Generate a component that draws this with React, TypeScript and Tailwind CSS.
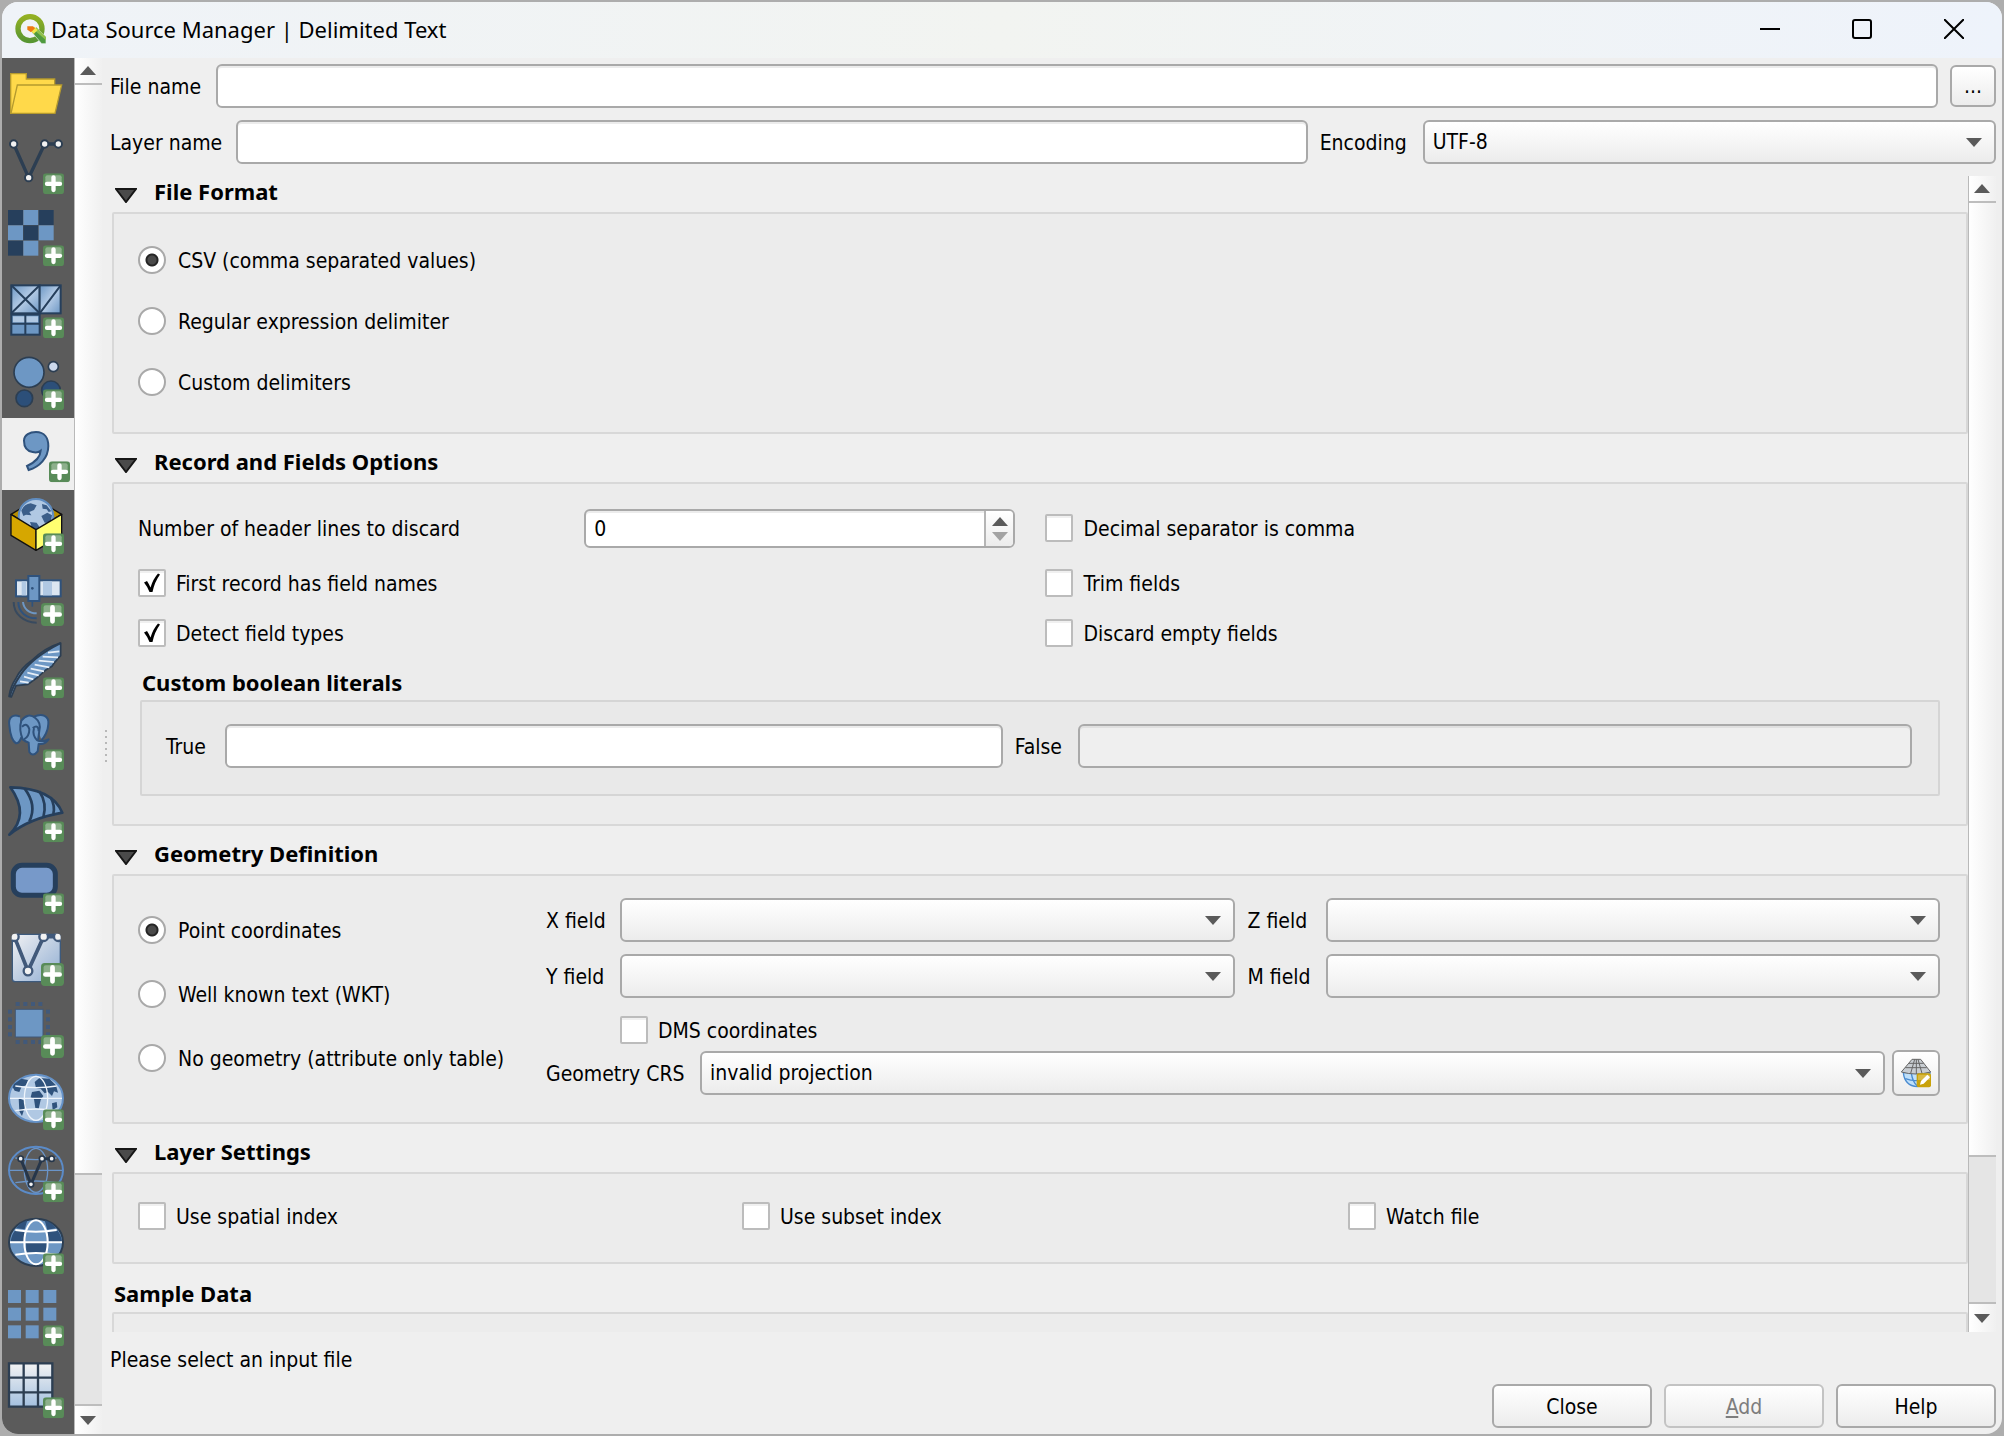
import clsx from 'clsx';
import { useId, useState } from 'react';
import type { ReactNode } from 'react';

const NAVY = '#263f5c';
const BLUE = '#6d97c4';
const PALE = '#b0c8e3';

const fieldBase =
  "h-11 min-w-0 rounded-md border-2 border-[#a9a9a9] px-2 font-['DejaVu_Sans_Condensed',sans-serif] text-[21px] text-black outline-none";
const raised = 'bg-linear-to-b from-white to-[#ececec]';
const inset = 'bg-white shadow-[inset_0_2px_0_#ececec]';

/* ---------- sidebar drawings, all on a 216 unit square ---------- */

function PlusBadge({ x = 123, y = 130, size = 63 }: { x?: number; y?: number; size?: number }) {
  return (
    <svg x={x} y={y} width={size} height={size} viewBox="0 0 63 63">
      <rect width="63" height="63" rx="10" fill="#588b58" />
      <path d="M7 30V12q0-6 6-6h37q6 0 6 6v18z" fill="#8db08c" />
      <path d="M31.500 12v38M12 31.500h39" stroke="#fff" strokeWidth="13" strokeLinecap="round" />
    </svg>
  );
}

function Nodes({ points, r, stroke, width }: { points: number[][]; r: number; stroke: string; width: number }) {
  return (
    <g stroke={stroke} strokeWidth={width}>
      <polyline points={points.map((p) => p.join(',')).join(' ')} fill="none" strokeWidth={width + 4} />
      {points.map(([cx, cy]) => (
        <circle key={cx} cx={cx} cy={cy} r={r} fill="#f2f2f2" />
      ))}
    </g>
  );
}

function Graticule({ stroke, width }: { stroke: string; width: number }) {
  return (
    <g stroke={stroke} strokeWidth={width} fill="none">
      <ellipse cx="102" cy="97" rx="35" ry="66" />
      <path d="M24 97h156M40 60q62 10 124 0M40 134q62-10 124 0" />
    </g>
  );
}

function FolderIcon() {
  return (
    <g stroke="#b59a2e" strokeWidth="4" fill="#ffd94a">
      <path d="M26 166V47h47v16h85v20L150 166z" />
      <path d="M46 81h133l-20 85H27z" />
    </g>
  );
}

function VectorIcon() {
  return <Nodes points={[[35, 42], [80, 143], [128, 42], [169, 42]]} r={11} stroke="#2c3e52" width={6} />;
}

function RasterIcon() {
  return (
    <g>
      {[0, 1, 2, 3, 4, 5, 6, 7].map((i) => (
        <rect
          key={i}
          x={18 + (i % 3) * 46}
          y={24 + Math.floor(i / 3) * 46}
          width="45"
          height="45"
          fill={i % 2 ? BLUE : NAVY}
        />
      ))}
    </g>
  );
}

function MeshIcon() {
  return (
    <g stroke={NAVY} strokeWidth="6">
      <rect x="28" y="34" width="85" height="84" fill="url(#sheen)" />
      <rect x="113" y="34" width="63" height="84" fill="url(#sheen)" />
      <rect x="28" y="122" width="85" height="60" fill={BLUE} />
      <path d="M33 127h75v18H33z" fill={PALE} stroke="none" />
      <path d="M28 34l85 84M113 34l-85 84M113 118l63-84M28 149h85M70 120v62" fill="none" />
    </g>
  );
}

function PointCloudIcon() {
  return (
    <g stroke="#2c3e52" strokeWidth="5">
      <circle cx="147" cy="133" r="28" fill="#2c4f79" />
      <circle cx="67" cy="157" r="25" fill="#2c4f79" />
      <circle cx="81" cy="79" r="45" fill={BLUE} />
      <circle cx="154" cy="62" r="15" fill="#cdd9ec" />
    </g>
  );
}

function CommaIcon() {
  return (
    <path
      d="M66 68C66 50 84 42 102 42C128 42 139 61 139 84C139 120 112 147 80 156L75 144C97 134 115 118 116 98C110 103 100 104 92 102C75 99 66 86 66 68Z"
      fill={BLUE}
      stroke="#2f527c"
      strokeWidth="6"
    />
  );
}

function GeoPackageIcon() {
  return (
    <g strokeLinejoin="round">
      <path d="M27 73l40-24h72l40 24-77 46z" fill="#b88f00" stroke="#111" strokeWidth="4" />
      <circle cx="102" cy="79" r="52" fill={PALE} stroke="#5f8cc0" strokeWidth="6" />
      <path
        d="M58 62q8-20 28-22l18 6-8 14-14 6 6 10-16-2-8 4zM84 96l20 2 8 12-8 22-12-12zM120 42l14 4 14 18-8 2-6-8-12-2zM118 78l18-10 14 8-4 22-18 0z"
        fill="#3b5e89"
      />
      <path d="M27 73l75 46v62l-75-45z" fill="#d6a700" stroke="#111" strokeWidth="4" />
      <path d="M102 119l77-46v63l-77 45z" fill="#ffff70" stroke="#111" strokeWidth="4" />
    </g>
  );
}

function SatelliteIcon() {
  return (
    <g fill="none">
      <path d="M35 120c0 36 30 62 69 62" stroke="#384a5f" strokeWidth="6" />
      <path d="M49 120c0 30 24 49 55 49" stroke="#2f527c" strokeWidth="6" />
      <path d="M63 120c2 20 18 34 41 34" stroke={BLUE} strokeWidth="6" />
      <path d="M91 120v14" stroke="#2f527c" strokeWidth="5" />
      <rect x="42" y="55" width="37" height="48" fill="#dce6f1" stroke="#2f527c" strokeWidth="6" />
      <path d="M59 58h14v42H59z" fill={PALE} />
      <rect x="99" y="55" width="77" height="48" fill="#dce6f1" stroke="#2f527c" strokeWidth="6" />
      <path d="M123 58h27v42h-27z" fill={PALE} />
      <path d="M79 42h33v75H79z" fill={BLUE} stroke="#2f527c" strokeWidth="6" />
      <circle cx="91" cy="79" r="4" fill="#2f527c" />
    </g>
  );
}

function FeatherIcon() {
  return (
    <g>
      <path
        d="M176 27v38l-18 20-8 12-20 12-22 20-30 22-36 4-14 34-7-2q4-30 22-56 14-28 44-50 44-42 89-54z"
        fill={BLUE}
        stroke="#2c3e52"
        strokeWidth="5"
        strokeLinejoin="round"
      />
      <path
        d="M138 56l34-4M122 68l46 2M110 80l46 4M98 92l44 8M86 104l40 8M76 116l34 8M66 128l28 8M54 142l26 4"
        stroke="#e6eef7"
        strokeWidth="5"
      />
      <path d="M176 27Q90 70 56 122Q30 160 24 186" stroke="#2c3e52" strokeWidth="6" fill="none" />
    </g>
  );
}

function ElephantIcon() {
  return (
    <g fill={BLUE} stroke="#2f527c" strokeWidth="6" strokeLinejoin="round">
      <path d="M54 32C34 22 18 34 22 58C24 80 30 104 42 112C50 112 56 100 58 94M96 32C120 20 142 30 139 54C138 74 128 94 118 102" />
      <path d="M58 44Q78 18 100 36Q118 50 112 74L108 104Q124 108 140 100Q130 116 110 114L107 136Q92 154 82 138L80 110Q70 106 62 100Q50 70 58 44Z" />
      <path d="M60 62Q76 48 82 70Q82 92 66 100M92 66Q110 54 110 76M96 66Q90 88 106 104" fill="none" />
    </g>
  );
}

function SailIcon() {
  return (
    <g stroke={NAVY} strokeWidth="8" strokeLinejoin="round">
      <path d="M25 28Q150 30 181 104Q80 122 22 170Q84 110 25 28Z" fill={BLUE} />
      <path d="M68 32Q106 82 82 130M112 40Q136 76 124 118M146 58Q160 84 154 108" fill="none" />
    </g>
  );
}

function RoundedDbIcon() {
  return <rect x="34" y="46" width="126" height="90" rx="26" fill="#7799c9" stroke={NAVY} strokeWidth="15" />;
}

function VirtualIcon() {
  return (
    <g>
      <clipPath id="virtual-clip">
        <rect x="29" y="35" width="147" height="145" rx="10" />
      </clipPath>
      <rect x="31" y="37" width="144" height="142" rx="9" fill="url(#paper)" stroke="#3d5a7c" strokeWidth="4" />
      <g clipPath="url(#virtual-clip)">
        <Nodes points={[[37, 44], [78, 147], [125, 44], [169, 44]]} r={13} stroke="#41597a" width={7} />
      </g>
    </g>
  );
}

function MemoryIcon() {
  return (
    <g fill="#41597a">
      {[47, 70, 93, 115].map((n) => (
        <g key={n}>
          <rect x={n - 6} y="24" width="12" height="12" />
          <rect x={n - 6} y="138" width="12" height="12" />
          <rect x="18" y={n} width="12" height="12" />
          <rect x="132" y={n} width="12" height="12" />
        </g>
      ))}
      <rect x="40" y="46" width="83" height="83" fill={BLUE} stroke="#41597a" strokeWidth="3" />
    </g>
  );
}

function WmsIcon() {
  return (
    <g>
      <ellipse cx="102" cy="97" rx="81" ry="71" fill={PALE} stroke="#6592c8" strokeWidth="6" />
      <path
        d="M36 54l22-16 20 4-6 16-14 6-6 14-14-4-6-10zM50 96l18 8 2 16-10 30-8-14zM98 48l14-12 30 2 20 20 6 22-12-4-6 14-12-12-10 4-12-14-14-2zM90 78l22-4 12 16-8 12-6 26-10-2-4-26-10-6zM150 112l14-4 2 16-14 8z"
        fill="#2f527c"
      />
      <Graticule stroke="#eef4fb" width={4} />
    </g>
  );
}

function WfsIcon() {
  return (
    <g>
      <ellipse cx="102" cy="97" rx="81" ry="71" fill="none" stroke="#5b8bc8" strokeWidth="6" />
      <Graticule stroke="#6a94c8" width={4} />
      <Nodes points={[[56, 62], [87, 139], [120, 62], [149, 62]]} r={8} stroke="#26364a" width={5} />
    </g>
  );
}

function WcsIcon() {
  return (
    <g>
      <ellipse cx="102" cy="97" rx="81" ry="71" fill={BLUE} stroke="#2c3e52" strokeWidth="6" />
      <path d="M42 55q10-16 34-24l-8 27zM128 31q22 6 34 24l-26 4zM72 98h64l-3 34H73z" fill="#2f527c" />
      <path d="M26 95q2-20 14-34l30 3-4 31zM180 95q-2-20-14-34l-30 3 4 31z" fill="#2f527c" />
      <Graticule stroke="#fff" width={6} />
    </g>
  );
}

function XyzIcon() {
  return (
    <g fill={BLUE}>
      {[0, 1, 2, 3, 4, 5, 6, 7].map((i) => (
        <rect key={i} x={18 + (i % 3) * 53} y={24 + Math.floor(i / 3) * 53} width="39" height="39" />
      ))}
    </g>
  );
}

function VectorTileIcon() {
  return (
    <g>
      <rect x="20" y="27" width="132" height="132" fill="url(#tiles)" />
      <path d="M21 25v136M65 25v136M108 25v136M151 25v136M18 28h136M18 71h136M18 115h136M18 158h136" stroke="#2c3e52" strokeWidth="7" />
    </g>
  );
}

const sources: { name: string; Icon: () => ReactNode; badge?: { x?: number; y?: number; size?: number } | null }[] = [
  { name: 'Browser', Icon: FolderIcon, badge: null },
  { name: 'Vector', Icon: VectorIcon },
  { name: 'Raster', Icon: RasterIcon },
  { name: 'Mesh', Icon: MeshIcon },
  { name: 'Point Cloud', Icon: PointCloudIcon },
  { name: 'Delimited Text', Icon: CommaIcon, badge: { x: 141 } },
  { name: 'GeoPackage', Icon: GeoPackageIcon },
  { name: 'GPS', Icon: SatelliteIcon, badge: { x: 117, y: 123, size: 69 } },
  { name: 'SpatiaLite', Icon: FeatherIcon },
  { name: 'PostgreSQL', Icon: ElephantIcon },
  { name: 'SQL Server', Icon: SailIcon },
  { name: 'Oracle', Icon: RoundedDbIcon },
  { name: 'Virtual Layer', Icon: VirtualIcon, badge: { x: 117, y: 123, size: 69 } },
  { name: 'SAP HANA', Icon: MemoryIcon, badge: { x: 117, y: 123, size: 69 } },
  { name: 'WMS/WMTS', Icon: WmsIcon },
  { name: 'WFS', Icon: WfsIcon },
  { name: 'WCS', Icon: WcsIcon },
  { name: 'XYZ', Icon: XyzIcon },
  { name: 'Vector Tile', Icon: VectorTileIcon },
];

function Gradients() {
  return (
    <svg className="absolute size-0" aria-hidden="true">
      <defs>
        <linearGradient id="sheen" x1="0" y1="0" x2="1" y2="1">
          <stop offset="0" stopColor={BLUE} />
          <stop offset="0.5" stopColor="#b4cbe6" />
          <stop offset="1" stopColor={BLUE} />
        </linearGradient>
        <linearGradient id="paper" x1="0" y1="0" x2="1" y2="1">
          <stop offset="0" stopColor="#f1f1f3" />
          <stop offset="1" stopColor="#8fadd2" />
        </linearGradient>
        <linearGradient id="tiles" x1="0" y1="0" x2="0" y2="1">
          <stop offset="0" stopColor="#f3f3f3" />
          <stop offset="1" stopColor="#a3c0e0" />
        </linearGradient>
        <linearGradient id="ring" x1="0" y1="0" x2="0" y2="1">
          <stop offset="0" stopColor="#93b023" />
          <stop offset="1" stopColor="#589632" />
        </linearGradient>
      </defs>
    </svg>
  );
}

function QgisLogo() {
  return (
    <svg viewBox="0 0 93 90" className="h-[30px] w-[31px]" aria-hidden="true">
      <circle cx="45" cy="44" r="36" fill="none" stroke="url(#ring)" strokeWidth="16" />
      <path d="M50 54l14-14 29 29v20H80z" fill="#4f9a3f" stroke="#eff3f8" strokeWidth="2" />
      <path d="M64 40l29 29v10L57 47z" fill="#8fc04a" />
      <path d="M46 48l12-10 10 10-12 12z" fill="#f0e64a" />
      <path d="M37 37h17l6 6-12 12-11-8z" fill="#ee7913" />
    </svg>
  );
}

function CrsIcon() {
  return (
    <svg viewBox="0 0 96 90" className="h-[30px] w-8" aria-hidden="true">
      <path d="M10 44q4 40 42 42 36-4 38-42z" fill="#bfe0fa" stroke="#4a8bd0" strokeWidth="4" />
      <path d="M34 46q4 26 18 38M66 46q-2 20-14 38M16 62q32 12 66 0" fill="none" stroke="#4a8bd0" strokeWidth="4" />
      <path d="M36 4h26l30 38q-44 12-88 0z" fill="#c8cdd2" stroke="#666" strokeWidth="3" />
      <path d="M44 4l-12 42M54 4l12 42M49 4v44M27 16h44M16 29h64" fill="none" stroke="#666" strokeWidth="3" />
      <rect x="50" y="46" width="43" height="42" rx="6" fill="#c9a20a" />
      <path d="M54 66V54q0-4 4-4h28q4 0 4 4v12z" fill="#d8b945" />
      <path d="M60 80l3-11 19-19 8 8-19 19z" fill="#fff" />
    </svg>
  );
}

/* ---------- controls ---------- */

function Arrow({ up = false, className = 'text-[#5a5a5a]' }: { up?: boolean; className?: string }) {
  return (
    <svg viewBox="0 0 16 9" className={clsx('pointer-events-none h-[9px] w-4', className)} aria-hidden="true">
      <path d={up ? 'M0 9L8 0L16 9z' : 'M0 0h16L8 9z'} fill="currentColor" />
    </svg>
  );
}

function ScrollBar({ thumb, groove, className }: { thumb: string; groove: string; className: string }) {
  return (
    <div className={clsx('flex shrink-0 flex-col border-l border-[#b9b9b9] bg-linear-to-r from-white to-[#f0f0f0]', className)}>
      <button aria-label="Scroll up" className="flex h-[27px] items-center justify-center border-b-2 border-[#bdbdbd] pr-0.5">
        <Arrow up />
      </button>
      <div className={thumb} />
      <div className={clsx('border-y-2 border-[#bdbdbd] bg-[#e5e5e5]', groove)} />
      <button aria-label="Scroll down" className="flex h-7 items-center justify-center pr-0.5">
        <Arrow />
      </button>
    </div>
  );
}

function Combo({ value = '', id, className }: { value?: string; id: string; className?: string }) {
  return (
    <div className={clsx('grid min-w-0 items-center', className)}>
      <select id={id} defaultValue={value} className={clsx(fieldBase, raised, 'col-start-1 row-start-1 w-full appearance-none')}>
        <option value={value}>{value}</option>
      </select>
      <Arrow className="col-start-1 row-start-1 mr-3.5 justify-self-end text-[#5a5a5a]" />
    </div>
  );
}

function Radio({ name, label, checked = false }: { name: string; label: string; checked?: boolean }) {
  return (
    <label className="flex h-7 items-center gap-3">
      <input
        type="radio"
        name={name}
        defaultChecked={checked}
        className="size-7 shrink-0 appearance-none rounded-full border-2 border-[#a9a9a9] bg-white checked:bg-[radial-gradient(circle,#4a4a4a_4px,#262626_5px,#262626_6px,#fff_7px)]"
      />
      <span className="pt-0.5">{label}</span>
    </label>
  );
}

function Check({ label, checked = false }: { label: string; checked?: boolean }) {
  return (
    <label className="flex h-7 items-center gap-2.5">
      <span className="grid size-7 shrink-0 place-items-center">
        <input
          type="checkbox"
          defaultChecked={checked}
          className="peer col-start-1 row-start-1 size-7 appearance-none rounded-xs border-2 border-[#bcbcbc] bg-white shadow-[inset_0_2px_0_#f0f0f0]"
        />
        <svg
          viewBox="0 0 18 20"
          className="pointer-events-none col-start-1 row-start-1 hidden h-5 w-[18px] peer-checked:block"
          aria-hidden="true"
        >
          <path d="M1 9.500L4 8Q6 11 7.500 14.500Q10 6 15 0.500L17 1.500Q11.500 9 9.500 19H6.500Q4 13 1 9.500Z" fill="#000" />
        </svg>
      </span>
      <span className="pt-0.5">{label}</span>
    </label>
  );
}

function Group({ title, className, children }: { title: string; className?: string; children: ReactNode }) {
  const [open, setOpen] = useState(true);
  return (
    <section className="mb-3">
      <h2 className="h-9">
        <button
          aria-expanded={open}
          onClick={() => setOpen(!open)}
          className="flex h-[30px] items-center gap-[17px] pl-[3px] font-['Noto_Sans',sans-serif] text-[22px] leading-[30px] font-bold"
        >
          <svg viewBox="0 0 22 15" className="mt-2 h-[15px] w-[22px]" aria-hidden="true">
            <path d="M1 1h20L11 14z" fill="#4a4a4a" stroke="#161616" strokeWidth="2" />
          </svg>
          {title}
        </button>
      </h2>
      {open && <div className={clsx('rounded-xs border-2 border-[#d8d8d8] bg-[#ececec] pr-[26px] pl-6', className)}>{children}</div>}
    </section>
  );
}

function HeaderLines() {
  const id = useId();
  return (
    <div className="grid h-[38px] grid-cols-[446fr_431fr] items-center">
      <label htmlFor={id}>Number of header lines to discard</label>
      <div className={clsx('flex h-[39px] overflow-hidden rounded-md border-2 border-[#a9a9a9]', inset)}>
        <input id={id} type="text" inputMode="numeric" defaultValue="0" className="min-w-0 flex-1 bg-transparent px-2 outline-none" />
        <div className={clsx('flex w-[29px] flex-col items-center justify-center gap-1.5 border-l-2 border-[#b5b5b5]', raised)}>
          <button aria-label="Increase">
            <Arrow up />
          </button>
          <button aria-label="Decrease" disabled>
            <Arrow className="text-[#a3a3a3]" />
          </button>
        </div>
      </div>
    </div>
  );
}

function TitleBar() {
  return (
    <header className="flex h-14 shrink-0 items-center bg-linear-to-r from-[#eff3f8] via-[#f2f4f1] to-[#eef3fb] pr-0.5 pb-0.5 pl-[13px]">
      <QgisLogo />
      <h1 className="flex-1 pl-[5px] font-['Noto_Sans',sans-serif] text-[22px]">Data Source Manager | Delimited Text</h1>
      <button aria-label="Minimize" className="flex w-[92px] justify-center">
        <svg viewBox="0 0 20 20" className="size-5" stroke="#000" strokeWidth="2">
          <path d="M0 10h20" />
        </svg>
      </button>
      <button aria-label="Maximize" className="flex w-[92px] justify-center">
        <svg viewBox="0 0 20 20" className="size-5" fill="none" stroke="#000" strokeWidth="2">
          <rect x="1" y="1" width="18" height="18" rx="2" />
        </svg>
      </button>
      <button aria-label="Close window" className="flex w-[92px] justify-center">
        <svg viewBox="0 0 20 20" className="size-5" stroke="#000" strokeWidth="2">
          <path d="M0 0l20 20M20 0L0 20" />
        </svg>
      </button>
    </header>
  );
}

function SourceList() {
  return (
    <nav className="flex w-[72px] shrink-0 flex-col overflow-hidden bg-[#5b5b5b]">
      {sources.map(({ name, Icon, badge }) => (
        <button key={name} aria-label={name} className={clsx('size-[72px] shrink-0', name === 'Delimited Text' && 'bg-[#efefef]')}>
          <svg viewBox="0 0 216 216" className="size-[72px]" aria-hidden="true">
            <Icon />
            {badge !== null && <PlusBadge {...badge} />}
          </svg>
        </button>
      ))}
    </nav>
  );
}

function GeometryFields() {
  return (
    <div className="flex flex-col">
      <div className="grid grid-cols-[74px_1fr_91px_1fr] items-center gap-y-3">
        <label htmlFor="x-field" className="pt-0.5">X field</label>
        <Combo id="x-field" />
        <label htmlFor="z-field" className="pt-0.5 pl-[13px]">Z field</label>
        <Combo id="z-field" />
        <label htmlFor="y-field" className="pt-0.5">Y field</label>
        <Combo id="y-field" />
        <label htmlFor="m-field" className="pt-0.5 pl-[13px]">M field</label>
        <Combo id="m-field" />
      </div>
      <div className="mt-[18px] mb-1.5 pl-[74px]">
        <Check label="DMS coordinates" />
      </div>
      <div className="flex items-center">
        <label htmlFor="crs" className="w-[154px] pt-0.5">Geometry CRS</label>
        <Combo id="crs" value="invalid projection" className="flex-1" />
        <button
          aria-label="Select CRS"
          className={clsx('ml-[7px] flex h-[46px] w-12 items-center justify-center rounded-md border-2 border-[#a9a9a9]', raised)}
        >
          <CrsIcon />
        </button>
      </div>
    </div>
  );
}

export default function App() {
  return (
    <div className="h-screen bg-[#adadad] p-0.5 font-['DejaVu_Sans_Condensed','DejaVu_Sans',sans-serif] text-[21px] leading-7 text-black">
      <Gradients />
      <div className="flex h-full flex-col overflow-hidden rounded-2xl bg-[#efefef]">
        <TitleBar />
        <div className="flex min-h-0 flex-1">
          <SourceList />
          <ScrollBar className="w-7" thumb="grow-[1091]" groove="grow-[230]" />
          <div className="flex w-2 shrink-0 flex-col items-center justify-center gap-1">
            {[0, 1, 2, 3, 4, 5].map((n) => (
              <span key={n} className="size-0.5 bg-[#b8b8b8]" />
            ))}
          </div>

          <main className="flex min-w-0 flex-1 flex-col pt-1.5 pr-1.5 pb-1.5">
            <div className="flex items-center">
              <label htmlFor="file-name" className="w-[106px] pt-0.5">File name</label>
              <input id="file-name" type="text" className={clsx(fieldBase, inset, 'flex-1')} />
              <button className={clsx('ml-3 h-[42px] w-[46px] rounded-md border-2 border-[#a9a9a9]', raised)}>...</button>
            </div>
            <div className="mt-3 flex items-center">
              <label htmlFor="layer-name" className="w-[126px] pt-0.5">Layer name</label>
              <input id="layer-name" type="text" className={clsx(fieldBase, inset, 'flex-[1051]')} />
              <label htmlFor="encoding" className="w-[115px] pt-0.5 pl-3">Encoding</label>
              <Combo id="encoding" value="UTF-8" className="flex-[573]" />
            </div>

            <div className="mt-3 flex min-h-0 flex-1">
              <div className="min-w-0 flex-1 overflow-hidden pl-0.5">
                <Group title="File Format" className="flex flex-col gap-[33px] pt-8 pb-9">
                  <Radio name="format" label="CSV (comma separated values)" checked />
                  <Radio name="format" label="Regular expression delimiter" />
                  <Radio name="format" label="Custom delimiters" />
                </Group>

                <Group title="Record and Fields Options" className="pt-[25px] pb-7">
                  <div className="grid grid-cols-[877fr_894fr] items-center gap-x-[30px] gap-y-[22px]">
                    <HeaderLines />
                    <Check label="Decimal separator is comma" />
                    <Check label="First record has field names" checked />
                    <Check label="Trim fields" />
                    <Check label="Detect field types" checked />
                    <Check label="Discard empty fields" />
                  </div>
                  <h3 className="mt-[17px] h-9 pl-1 font-['Noto_Sans',sans-serif] text-[22px] leading-9 font-bold">
                    Custom boolean literals
                  </h3>
                  <div className="ml-0.5 flex h-24 items-center rounded-xs border-2 border-[#d5d5d5] bg-[#e9e9e9] pr-[26px] pb-1 pl-6">
                    <label htmlFor="true-literal" className="w-[59px] pt-0.5">True</label>
                    <input id="true-literal" type="text" className={clsx(fieldBase, inset, 'flex-[778]')} />
                    <label htmlFor="false-literal" className="w-[75px] pt-0.5 pl-3">False</label>
                    <input
                      id="false-literal"
                      type="text"
                      disabled
                      className={clsx(fieldBase, 'flex-[836] bg-[#efefef] shadow-[inset_0_2px_0_#e0e0e0]')}
                    />
                  </div>
                </Group>

                <Group title="Geometry Definition" className="grid grid-cols-[408px_1fr] pt-[22px] pb-[26px]">
                  <div className="flex flex-col gap-9 pt-[18px]">
                    <Radio name="geometry" label="Point coordinates" checked />
                    <Radio name="geometry" label="Well known text (WKT)" />
                    <Radio name="geometry" label="No geometry (attribute only table)" />
                  </div>
                  <GeometryFields />
                </Group>

                <Group title="Layer Settings" className="grid grid-cols-[604fr_606fr_592fr] pt-7 pb-8">
                  <Check label="Use spatial index" />
                  <Check label="Use subset index" />
                  <Check label="Watch file" />
                </Group>

                <h2 className="h-9 pl-0.5 font-['Noto_Sans',sans-serif] text-[22px] leading-[34px] font-bold">Sample Data</h2>
                <div className="h-40 rounded-xs border-2 border-[#d8d8d8] bg-[#ececec]" />
              </div>
              <ScrollBar className="w-7" thumb="grow-[957]" groove="grow-[146]" />
            </div>

            <p className="mt-3.5">Please select an input file</p>
            <div className="mt-2.5 flex justify-end gap-3">
              <button className={clsx('h-11 w-40 rounded-md border-2 border-[#a9a9a9] pt-0.5', raised)}>Close</button>
              <button disabled className={clsx('h-11 w-40 rounded-md border-2 border-[#c3c3c3] pt-0.5 text-[#7d7d7d]', raised)}>
                <span className="underline">A</span>dd
              </button>
              <button className={clsx('h-11 w-40 rounded-md border-2 border-[#a9a9a9] pt-0.5', raised)}>Help</button>
            </div>
          </main>
        </div>
      </div>
    </div>
  );
}
